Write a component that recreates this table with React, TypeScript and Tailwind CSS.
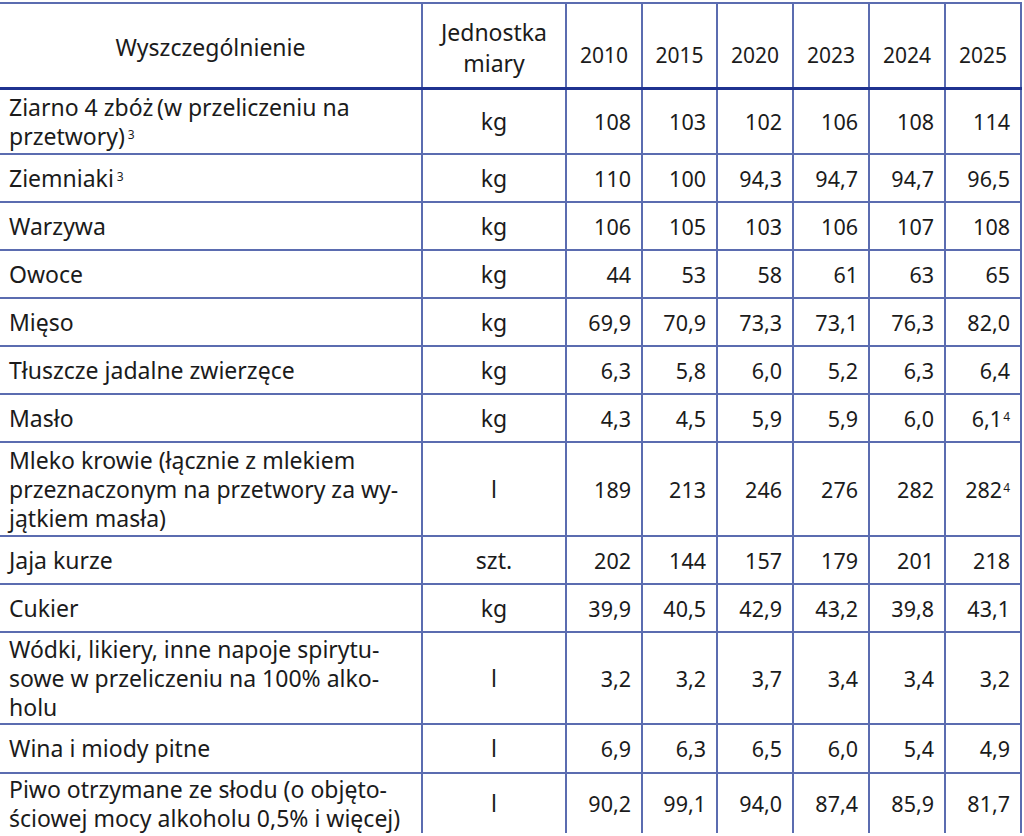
import React from "react";

type Row = {
  name: React.ReactNode;
  unit: string;
  values: React.ReactNode[];
  h: string;
};

const cols = "grid grid-cols-[423px_144px_76px_75px_76px_76px_76px_76px]";
const line = "border-[#5b6cb0]";

const Sup = ({ children, tight }: { children: React.ReactNode; tight?: boolean }) => (
  <sup className={tight ? "ml-[1px] text-[12px]" : "ml-[3px] text-[12px]"}>{children}</sup>
);

const rows: Row[] = [
  {
    name: (
      <>
        Ziarno 4 zbóż{"\u2009"}(w przeliczeniu na
        <br />
        przetwory)
        <Sup>3</Sup>
      </>
    ),
    unit: "kg",
    values: ["108", "103", "102", "106", "108", "114"],
    h: "h-[65px]",
  },
  {
    name: (
      <>
        Ziemniaki<Sup>3</Sup>
      </>
    ),
    unit: "kg",
    values: ["110", "100", "94,3", "94,7", "94,7", "96,5"],
    h: "h-[48px]",
  },
  { name: "Warzywa", unit: "kg", values: ["106", "105", "103", "106", "107", "108"], h: "h-[48px]" },
  { name: "Owoce", unit: "kg", values: ["44", "53", "58", "61", "63", "65"], h: "h-[48px]" },
  { name: "Mięso", unit: "kg", values: ["69,9", "70,9", "73,3", "73,1", "76,3", "82,0"], h: "h-[48px]" },
  {
    name: "Tłuszcze jadalne zwierzęce",
    unit: "kg",
    values: ["6,3", "5,8", "6,0", "5,2", "6,3", "6,4"],
    h: "h-[48px]",
  },
  {
    name: "Masło",
    unit: "kg",
    values: ["4,3", "4,5", "5,9", "5,9", "6,0", <>6,1<Sup tight>4</Sup></>],
    h: "h-[48px]",
  },
  {
    name: (
      <>
        Mleko krowie (łącznie z mlekiem
        <br />
        przeznaczonym na przetwory za wy-
        <br />
        jątkiem masła)
      </>
    ),
    unit: "l",
    values: ["189", "213", "246", "276", "282", <>282<Sup tight>4</Sup></>],
    h: "h-[94px]",
  },
  { name: "Jaja kurze", unit: "szt.", values: ["202", "144", "157", "179", "201", "218"], h: "h-[48px]" },
  { name: "Cukier", unit: "kg", values: ["39,9", "40,5", "42,9", "43,2", "39,8", "43,1"], h: "h-[48px]" },
  {
    name: (
      <>
        Wódki, likiery, inne napoje spirytu-
        <br />
        sowe w przeliczeniu na 100% alko-
        <br />
        holu
      </>
    ),
    unit: "l",
    values: ["3,2", "3,2", "3,7", "3,4", "3,4", "3,2"],
    h: "h-[92px]",
  },
  { name: "Wina i miody pitne", unit: "l", values: ["6,9", "6,3", "6,5", "6,0", "5,4", "4,9"], h: "h-[49px]" },
  {
    name: (
      <>
        Piwo otrzymane ze słodu (o objęto-
        <br />
        ściowej mocy alkoholu 0,5% i więcej)
      </>
    ),
    unit: "l",
    values: ["90,2", "99,1", "94,0", "87,4", "85,9", "81,7"],
    h: "h-[59px]",
  },
];

const years = ["2010", "2015", "2020", "2023", "2024", "2025"];

export default function App() {
  return (
    <div
      className="min-h-[836px] bg-white pt-[2px] text-[23px] text-[#1b1b1b]"
      style={{ fontFamily: '"Noto Sans", "Open Sans", sans-serif' }}
    >
      <div className="w-[1022px]">
        {/* nagłówek */}
        <div className={`${cols} h-[88px] border-t-2 border-b-[3px] ${line} border-b-[#1f3290]`}>
          <div className={`flex items-center justify-center border-r-2 ${line} pt-[4px]`}>
            Wyszczególnienie
          </div>
          <div
            className={`flex items-center justify-center border-r-2 ${line} pt-[4px] text-center leading-[31px]`}
          >
            Jednostka
            <br />
            miary
          </div>
          {years.map((y) => (
            <div
              key={y}
              className={`flex items-end justify-center border-r-2 ${line} pb-[19px] text-[21px] leading-[26px]`}
            >
              {y}
            </div>
          ))}
        </div>

        {rows.map((r, i) => {
          const last = i === rows.length - 1;
          const b = last ? "" : "border-b-2";
          return (
            <div key={i} className={`${cols} ${r.h}`}>
              <div className={`flex items-center border-r-2 ${b} ${line} pl-[9px] leading-[29px]`}>
                <span>{r.name}</span>
              </div>
              <div className={`flex items-center justify-center border-r-2 ${b} ${line} leading-[29px]`}>
                {r.unit}
              </div>
              {r.values.map((v, j) => (
                <div
                  key={j}
                  className={`flex items-center justify-end border-r-2 ${b} ${line} pr-[10px] text-[21.5px] leading-[29px]`}
                >
                  <span>{v}</span>
                </div>
              ))}
            </div>
          );
        })}
      </div>
    </div>
  );
}
